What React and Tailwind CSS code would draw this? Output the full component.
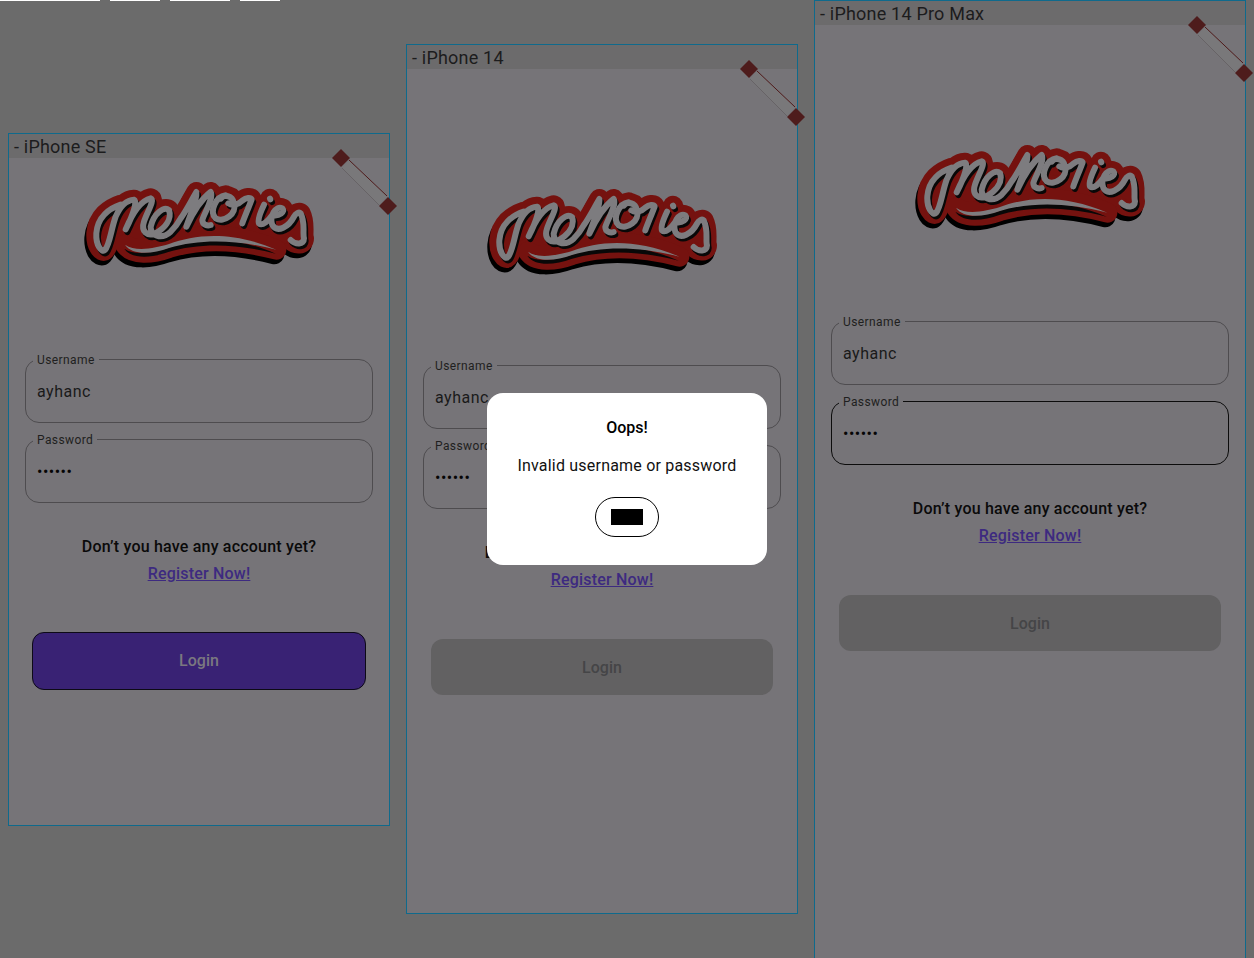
const LETTERS = [
  "M155 104 C122 115 86 140 82 190 C80 225 98 250 108 240 C122 225 127 175 140 140 C155 105 175 90 195 89 C205 92 195 130 170 178 C190 130 215 92 245 85 C258 90 235 125 225 155 C215 185 235 200 260 190 C285 175 310 150 300 120 C285 108 255 130 245 170 C245 195 275 212 305 185 C318 172 328 158 335 145 C350 125 365 95 382 66 C385 90 365 130 352 170 C375 120 400 85 425 66 C435 85 405 130 400 150 C400 165 415 168 425 165",
  "M470 76 C440 80 420 125 440 145 C465 160 505 130 495 100 C490 76 465 72 455 86",
  "M478 100 C490 108 508 104 520 92 C532 82 545 82 548 88 C538 115 525 145 520 160",
  "M585 104 C575 125 565 150 570 160 C580 170 600 150 610 135 C630 140 650 125 640 115 C620 105 600 140 610 165 C625 190 660 170 675 140 C680 130 690 125 695 130 C710 160 700 190 705 205 C705 225 680 225 665 210",
];
const DOT = "M603 86 L604 88";
const SWASH = "M168 224 C200 247 260 234 300 222 C380 192 490 182 622 239 C500 207 390 207 300 234 C250 252 190 257 168 224 Z";
const BLOB = "M130 200 C300 110 500 90 680 200 L620 240 C480 195 380 200 200 250 Z";

function LetterGroup({ stroke, width, dx = 0, dy = 0 }) {
  return (
    <g transform={`translate(${dx} ${dy})`} fill="none" stroke={stroke} strokeWidth={width} strokeLinecap="round" strokeLinejoin="round">
      {LETTERS.map((d) => <path key={d} d={d} />)}
      <path d={DOT} />
    </g>
  );
}

function Logo() {
  return (
    <svg viewBox="0 0 780 330" className="block w-[260px] h-[110px] self-center shrink-0">
      <LetterGroup stroke="#000000" width={60} dx={-6} dy={14} />
      <path d={BLOB} fill="#000000" transform="translate(-6 14)" />
      <path d={SWASH} fill="#000000" stroke="#000000" strokeWidth={60} strokeLinejoin="round" transform="translate(-6 14)" />
      <LetterGroup stroke="#75120f" width={60} />
      <path d={BLOB} fill="#75120f" />
      <path d={SWASH} fill="#75120f" stroke="#75120f" strokeWidth={60} strokeLinejoin="round" />
      <path d={SWASH} fill="#080808" transform="translate(-2 12)" />
      <LetterGroup stroke="#080808" width={18} dx={5} dy={8} />
      <path d={SWASH} fill="#7d7c7f" />
      <LetterGroup stroke="#7d7c7f" width={18} />
    </svg>
  );
}

function Handle() {
  return (
    <svg viewBox="0 0 70 70" className="absolute top-[12px] -right-[10px] w-[70px] h-[70px] overflow-visible">
      <path d="M20 14 L58 50 L50 59 L13 22 Z" fill="#79787a" />
      <path d="M13 22 L50 59" stroke="#676366" strokeWidth="1" />
      <path d="M20 14 L58 50" stroke="#4f1a1a" strokeWidth="1" />
      <path d="M12 3 L21 12 L12 21 L3 12 Z" fill="#4e1c1c" />
      <path d="M59 51 L68 60 L59 69 L50 60 Z" fill="#4e1c1c" />
    </svg>
  );
}

function Field({ label, children, active }) {
  return (
    <fieldset className={`h-[72px] rounded-[14px] border px-[7px] pb-0 ${active ? "border-[#0c0c0c]" : "border-[#4e4c4f]"}`}>
      <legend className="px-[4px] pt-[2px] text-[12px] leading-[14px] tracking-[0.4px] text-[#1f1f20]">{label}</legend>
      <div className="px-[4px] pt-[13px] text-[16px] leading-[24px] tracking-[0.5px] text-[#1a1a1a]">{children}</div>
    </fieldset>
  );
}

function Frame({ name, w, h, mt, logoTop, fieldsTop, btnTop, btnH, btnX, activeBtn, activePw }) {
  return (
    <div className={`relative shrink-0 border border-[#0f6a8c] bg-[#767478] ${w} ${h} ${mt} flex flex-col`}>
      <div className="h-[24px] shrink-0 bg-[#6c6b6c] pl-[5px] pt-px text-[18px] leading-[24px] tracking-[0.2px] text-[#1c1c1d]">- {name}</div>
      <div className={`${logoTop} flex flex-col`}>
        <Logo />
        <div className={`${fieldsTop} px-[16px] flex flex-col gap-[8px]`}>
          <Field label="Username">ayhanc</Field>
          <Field label="Password" active={activePw}>
            <span className="text-[#050505]">••••••</span>
          </Field>
        </div>
        <div className="mt-[32px] text-center text-[16px] leading-[24px] font-medium tracking-[0.2px] text-[#0a0a0a]">Don’t you have any account yet?</div>
        <div className="mt-[3px] text-center text-[16px] leading-[24px] font-medium tracking-[0.2px] text-[#3d2a80] underline">Register Now!</div>
        <div className={`${btnTop} ${btnX}`}>
          <div className={`${btnH} rounded-[12px] flex items-center justify-center text-[16px] font-medium ${activeBtn ? "bg-[#392274] border border-[#0d0a16] text-[#7b7880]" : "pt-[2px] bg-[#626162] text-[#454547]"}`}>Login</div>
        </div>
      </div>
      <Handle />
    </div>
  );
}

export default function App() {
  return (
    <div className="relative w-[1254px] h-[958px] overflow-hidden bg-[#6b6b6b] font-['Roboto',sans-serif]">
      <div className="absolute top-0 left-0 flex gap-[10px]">
        <div className="w-[100px] h-px bg-white" />
        <div className="w-[50px] h-px bg-white" />
        <div className="w-[60px] h-px bg-white" />
        <div className="w-[40px] h-px bg-white" />
      </div>
      <div className="flex items-start gap-[16px] pl-[8px]">
        <Frame name="iPhone SE" w="w-[382px]" h="h-[693px]" mt="mt-[133px]" logoTop="mt-[12px]" fieldsTop="mt-[71px]" btnTop="mt-[46px]" btnH="h-[58px]" btnX="px-[23px]" activeBtn />
        <Frame name="iPhone 14" w="w-[392px]" h="h-[870px]" mt="mt-[44px]" logoTop="mt-[108px]" fieldsTop="mt-[70px]" btnTop="mt-[47px]" btnH="h-[56px]" btnX="px-[24px]" />
        <Frame name="iPhone 14 Pro Max" w="w-[432px]" h="h-[970px]" mt="mt-0" logoTop="mt-[108px]" fieldsTop="mt-[70px]" btnTop="mt-[47px]" btnH="h-[56px]" btnX="px-[24px]" activePw />
      </div>
      <div className="absolute left-[487px] top-[393px] w-[280px] h-[172px] rounded-[16px] bg-white flex flex-col items-center pt-[23px]">
        <div className="text-[16px] leading-[24px] font-medium text-black">Oops!</div>
        <div className="mt-[14px] text-[16px] leading-[24px] tracking-[0.2px] text-[#111111]">Invalid username or password</div>
        <div className="mt-[19px] w-[64px] h-[40px] rounded-full border border-black flex items-center justify-center">
          <div className="w-[32px] h-[16px] bg-black" />
        </div>
      </div>
    </div>
  );
}
